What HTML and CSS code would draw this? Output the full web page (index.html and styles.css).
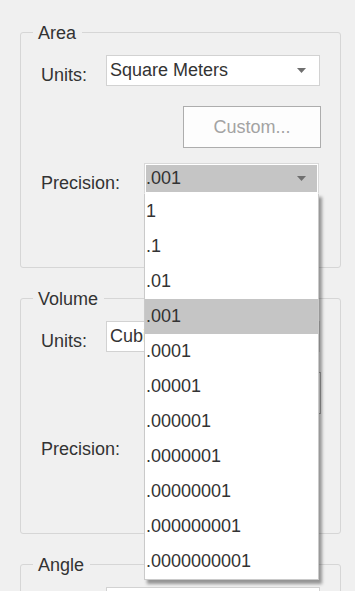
FILE: index.html
```html
<!DOCTYPE html>
<html lang="en">
<head>
    <meta charset="UTF-8">
    <meta name="viewport" content="width=device-width, initial-scale=1.0">
    <title>Units</title>
    <link rel="stylesheet" href="styles.css">
</head>
<body>

<!-- Area -->
<fieldset class="group">
    <legend>Area</legend>
    <div class="row">
        <label class="label label-units">Units:</label>
        <div class="combo combo-units">
            <span>Square Meters</span>
            <svg class="arrow" width="9" height="5" viewBox="0 0 9 5"><polygon points="0,0 9,0 4.5,5"/></svg>
        </div>
    </div>
    <div class="row">
        <button class="custom" type="button">Custom...</button>
    </div>
    <div class="row row-last">
        <label class="label label-precision">Precision:</label>
        <div class="combo combo-precision open">
            <span>.001</span>
            <svg class="arrow" width="9" height="5" viewBox="0 0 9 5"><polygon points="0,0 9,0 4.5,5"/></svg>

            <!-- open dropdown list -->
            <ul class="dropdown">
                <li>1</li>
                <li>.1</li>
                <li>.01</li>
                <li class="selected">.001</li>
                <li>.0001</li>
                <li>.00001</li>
                <li>.000001</li>
                <li>.0000001</li>
                <li>.00000001</li>
                <li>.000000001</li>
                <li>.0000000001</li>
            </ul>
        </div>
    </div>
</fieldset>

<!-- Volume -->
<fieldset class="group">
    <legend>Volume</legend>
    <div class="row">
        <label class="label label-units">Units:</label>
        <div class="combo combo-units">
            <span>Cubic Meters</span>
            <svg class="arrow" width="9" height="5" viewBox="0 0 9 5"><polygon points="0,0 9,0 4.5,5"/></svg>
        </div>
    </div>
    <div class="row">
        <button class="custom" type="button">Custom...</button>
    </div>
    <div class="row row-last">
        <label class="label label-precision">Precision:</label>
        <div class="combo combo-precision">
            <span>.001</span>
            <svg class="arrow" width="9" height="5" viewBox="0 0 9 5"><polygon points="0,0 9,0 4.5,5"/></svg>
        </div>
    </div>
</fieldset>

<!-- Angle -->
<fieldset class="group">
    <legend>Angle</legend>
    <div class="row">
        <label class="label label-units">Units:</label>
        <div class="combo combo-units">
            <span>Decimal Degrees</span>
            <svg class="arrow" width="9" height="5" viewBox="0 0 9 5"><polygon points="0,0 9,0 4.5,5"/></svg>
        </div>
    </div>
    <div class="row">
        <button class="custom" type="button">Custom...</button>
    </div>
    <div class="row row-last">
        <label class="label label-precision">Precision:</label>
        <div class="combo combo-precision">
            <span>.1</span>
            <svg class="arrow" width="9" height="5" viewBox="0 0 9 5"><polygon points="0,0 9,0 4.5,5"/></svg>
        </div>
    </div>
</fieldset>

</body>
</html>
```

FILE: styles.css
```css
/* dialog look */
body {
    margin: 0;
    padding: 21px 0 0 0;
    background-color: #f0f0f0;
    font-family: "Liberation Sans", Arial, sans-serif;
    font-size: 18px;
    color: #333;
}

.group {
    box-sizing: border-box;
    width: 321px;
    min-width: 0;
    margin: 0 0 19px 20px;
    padding: 12px 0 73px 12px;
    border: 1px solid #d6d6d6;
    border-radius: 3px;
}

.group + .group + .group {
    margin-top: 2px;
}

.group legend {
    padding: 2px 6px 0 5px;
    line-height: 20px;
    color: #333;
}

.row {
    display: flex;
    align-items: flex-start;
    padding-left: 8px;
    margin-bottom: 20px;
}

.row-last {
    margin-bottom: 0;
}

.row + .row-last {
    margin-top: -5px;
}

.label {
    line-height: 20px;
    margin-top: 10px;
}

.label-units {
    width: 65px;
}

.label-precision {
    width: 103px;
}

/* combo boxes */
.combo {
    position: relative;
    box-sizing: border-box;
    height: 31px;
    border: 1px solid #d2d2d2;
    background-color: #fff;
    display: flex;
    align-items: center;
    line-height: 29px;
}

.combo span {
    flex: 1;
    white-space: nowrap;
    overflow: hidden;
}

.combo .arrow {
    fill: #6f6f6f;
    margin-right: 13px;
    flex-shrink: 0;
}

.combo-units {
    width: 214px;
    padding-left: 3px;
}

.combo-precision {
    width: 175px;
    padding-left: 1px;
}

.combo-precision.open {
    border-color: #d9d9d9;
    background-color: #c5c5c5;
    box-shadow: inset 0 0 0 1px #fff;
}

.combo-precision.open .arrow {
    margin-right: 12px;
}

/* dropdown list */
.dropdown {
    position: absolute;
    top: 100%;
    left: -1px;
    z-index: 10;
    box-sizing: border-box;
    width: 175px;
    margin: 0;
    padding: 0;
    list-style: none;
    background-color: #fff;
    border: 1px solid #cacaca;
    border-top: 1px solid #fff;
    box-shadow: 3px 4px 3px rgba(0, 0, 0, 0.38);
}

.dropdown li {
    height: 35px;
    line-height: 35px;
    padding-left: 1px;
    color: #333;
}

.dropdown li.selected {
    background-color: #c5c5c5;
}

/* disabled button */
.custom {
    box-sizing: border-box;
    width: 138px;
    height: 42px;
    margin-left: 142px;
    padding: 0;
    border: 1px solid #adadad;
    background-color: #fdfdfd;
    color: #a3a3a3;
    font-family: "Liberation Sans", Arial, sans-serif;
    font-size: 18px;
    line-height: 40px;
}
```
